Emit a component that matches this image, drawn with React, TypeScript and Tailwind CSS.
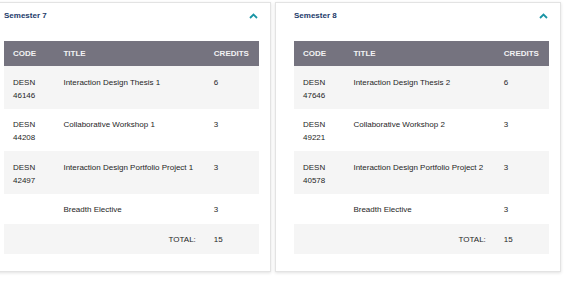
import React from "react";

type Row = { code?: [string, string]; title: string; credits: string; total?: boolean };

const sem7: Row[] = [
  { code: ["DESN", "46146"], title: "Interaction Design Thesis 1", credits: "6" },
  { code: ["DESN", "44208"], title: "Collaborative Workshop 1", credits: "3" },
  { code: ["DESN", "42497"], title: "Interaction Design Portfolio Project 1", credits: "3" },
  { title: "Breadth Elective", credits: "3" },
  { title: "TOTAL:", credits: "15", total: true },
];

const sem8: Row[] = [
  { code: ["DESN", "47646"], title: "Interaction Design Thesis 2", credits: "6" },
  { code: ["DESN", "49221"], title: "Collaborative Workshop 2", credits: "3" },
  { code: ["DESN", "40578"], title: "Interaction Design Portfolio Project 2", credits: "3" },
  { title: "Breadth Elective", credits: "3" },
  { title: "TOTAL:", credits: "15", total: true },
];

function Chevron() {
  return (
    <svg width="9" height="6" viewBox="0 0 9 6" className="mr-[1px]">
      <polyline points="1,5 4.5,1.5 8,5" fill="none" stroke="#1a95a5" strokeWidth="1.8" />
    </svg>
  );
}

function Card({ title, rows }: { title: string; rows: Row[] }) {
  return (
    <div className="flex-1 bg-white border border-[#e3e3e3] shadow-[0_1px_3px_rgba(0,0,0,0.12)] pl-[18px] pr-[11px] pt-[6px] pb-[17px]">
      <div className="flex items-center justify-between h-[13px] mb-[19px]">
        <span className="text-[8px] font-bold text-[#1c3a6a] leading-[13px]">{title}</span>
        <Chevron />
      </div>
      <div className="text-[8px] leading-[13px] text-[#262626]">
        <div className="grid grid-cols-[23.3%_59%_1fr] h-[25px] items-center bg-[#75737f] text-[#f2f2f4] font-bold">
          <div className="pl-[9px]">CODE</div>
          <div>TITLE</div>
          <div>CREDITS</div>
        </div>
        {rows.map((r, i) => (
          <div
            key={i}
            className={`grid grid-cols-[23.3%_59%_1fr] ${i % 2 === 0 ? "bg-[#f5f5f5]" : "bg-white"} ${r.code ? "pt-[9.5px] pb-[7px]" : "pt-[9.5px] pb-[7.5px]"}`}
          >
            <div className="pl-[9px]">
              {r.code ? (
                <>
                  <div>{r.code[0]}</div>
                  <div>{r.code[1]}</div>
                </>
              ) : null}
            </div>
            <div className={r.total ? "text-right pr-[18px]" : ""}>{r.title}</div>
            <div>{r.credits}</div>
          </div>
        ))}
      </div>
    </div>
  );
}

export default function App() {
  return (
    <div className="w-[570px] h-[281px] bg-white overflow-hidden" style={{ fontFamily: '"Liberation Sans", Arial, sans-serif' }}>
      <div className="flex gap-[4px] ml-[-15px] w-[576px] pt-[2px]">
        <Card title="Semester 7" rows={sem7} />
        <Card title="Semester 8" rows={sem8} />
      </div>
    </div>
  );
}
